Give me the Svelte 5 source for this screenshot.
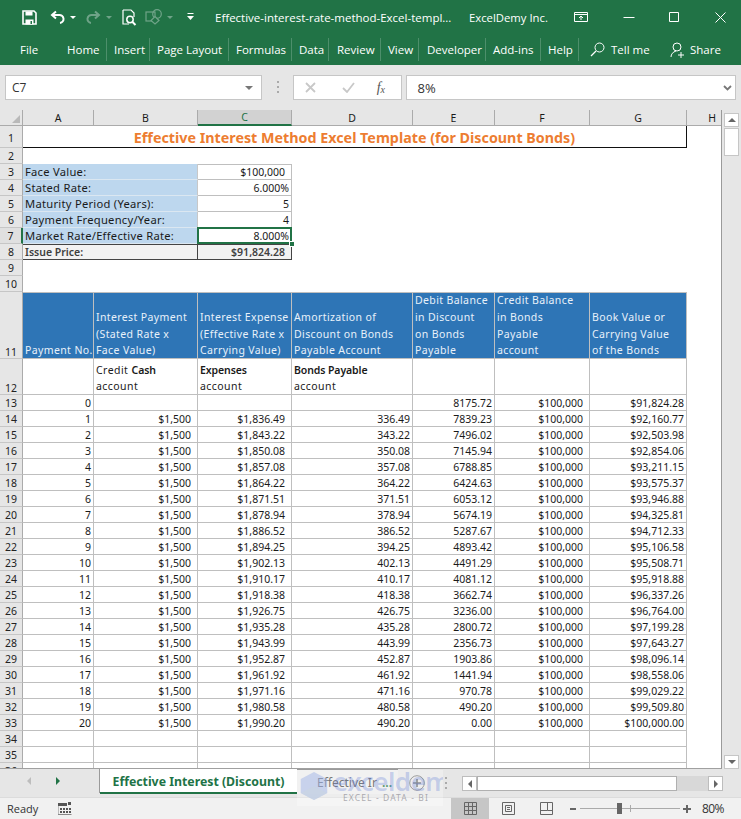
<script>
  const tabs = [
    ['Home', 'tHome'], ['Insert', 'tInsert'], ['Page Layout', 'tPage'], ['Formulas', 'tForm'], ['Data', 'tData'],
    ['Review', 'tRev'], ['View', 'tView'], ['Developer', 'tDev'], ['Add-ins', 'tAdd'], ['Help', 'tHelp']
  ];
  const cols = ['A', 'B', 'C', 'D', 'E', 'F', 'G', 'H'];
  const inputs = [
    [3, 'Face Value:', '$100,000', 'acc'],
    [4, 'Stated Rate:', '6.000%', ''],
    [5, 'Maturity Period (Years):', '5', ''],
    [6, 'Payment Frequency/Year:', '4', ''],
    [7, 'Market Rate/Effective Rate:', '8.000%', 'sel'],
    [8, 'Issue Price:', '$91,824.28', 'acc out']
  ];
  const exp = ['1,836.49','1,843.22','1,850.08','1,857.08','1,864.22','1,871.51','1,878.94','1,886.52','1,894.25','1,902.13','1,910.17','1,918.38','1,926.75','1,935.28','1,943.99','1,952.87','1,961.92','1,971.16','1,980.58','1,990.20'];
  const amo = ['336.49','343.22','350.08','357.08','364.22','371.51','378.94','386.52','394.25','402.13','410.17','418.38','426.75','435.28','443.99','452.87','461.92','471.16','480.58','490.20'];
  const deb = ['8175.72','7839.23','7496.02','7145.94','6788.85','6424.63','6053.12','5674.19','5287.67','4893.42','4491.29','4081.12','3662.74','3236.00','2800.72','2356.73','1903.86','1441.94','970.78','490.20','0.00'];
  const book = ['91,824.28','92,160.77','92,503.98','92,854.06','93,211.15','93,575.37','93,946.88','94,325.81','94,712.33','95,106.58','95,508.71','95,918.88','96,337.26','96,764.00','97,199.28','97,643.27','98,096.14','98,558.06','99,029.22','99,509.80','100,000.00'];
  const rows = deb.map((d, i) => ({
    row: 13 + i, n: i,
    pay: i ? '$1,500' : '', exp: i ? '$' + exp[i - 1] : '', amo: i ? amo[i - 1] : '',
    deb: d, book: '$' + book[i]
  }));
</script>

<div class="app">
  <header class="title">
    <svg class="ic save" viewBox="0 0 15 15"><path d="M1 1h11l2 2v11H1z" fill="none" stroke="#fff" stroke-width="1.6"/><path d="M3.5 1.5h7v4h-7zM3.5 9.500h8v5h-8z" fill="#fff"/><path d="M8.500 11h1.500v3H8.500z" fill="#217346"/></svg>
    <svg class="ic undo" viewBox="0 0 16 15"><path d="M6 1.500 2 5l4 3.500M2.500 5H9a4 4 0 0 1 1 8" fill="none" stroke="#fff" stroke-width="2"/></svg>
    <i class="caret c1"></i>
    <svg class="ic redo" viewBox="0 0 16 15"><path d="M10 1.500 14 5l-4 3.500M13.500 5H7a4 4 0 0 0-1 8" fill="none" stroke="#6fa388" stroke-width="2"/></svg>
    <i class="caret c2 dim"></i>
    <svg class="ic prev" viewBox="0 0 15 17"><path d="M1 1h8l3 3v4M1 1v14h6" fill="none" stroke="#fff" stroke-width="1.200"/><circle cx="8" cy="10.500" r="3.200" fill="none" stroke="#fff" stroke-width="1.500"/><path d="m10.500 13 3 3" stroke="#fff" stroke-width="2"/></svg>
    <svg class="ic shapes" viewBox="0 0 18 16"><rect x="1" y="3" width="9" height="9" fill="none" stroke="#6fa388" stroke-width="1.200"/><circle cx="12" cy="5" r="4.300" fill="none" stroke="#6fa388" stroke-width="1.200"/><path d="m10 7.500 4 4-4 3.500-4-3.500z" fill="#217346" stroke="#6fa388" stroke-width="1.200"/></svg>
    <i class="caret c3 dim"></i>
    <svg class="ic custom" viewBox="0 0 7 8"><path d="M.5 0h6v1h-6zM0 3h7L3.500 7z" fill="#fff"/></svg>
    <span class="fname">Effective-interest-rate-method-Excel-templ...</span>
    <span class="user">ExcelDemy Inc.</span>
    <svg class="ic display" viewBox="0 0 14 10"><path d="M.5.500h13v9H.500zM.5 2.500h13M7 8V4M5 6l2-2 2 2" fill="none" stroke="#fff"/></svg>
    <svg class="ic min" viewBox="0 0 11 1"><path d="M0 .5h11" stroke="#fff"/></svg>
    <svg class="ic max" viewBox="0 0 10 10"><path d="M.5.500h9v9h-9z" fill="none" stroke="#fff"/></svg>
    <svg class="ic close" viewBox="0 0 11 11"><path d="m.5.500 10 10m0-10-10 10" fill="none" stroke="#fff"/></svg>
  </header>

  <nav class="ribbon">
    <span class="file">File</span>
    {#each tabs as t}
      <span class="tab {t[1]}">{t[0]}</span>
    {/each}
    <svg class="ic search" viewBox="0 0 15 15"><circle cx="9.500" cy="5.500" r="4.500" fill="none" stroke="#fff"/><path d="M6 9 1 14" stroke="#fff" stroke-width="1.300"/></svg>
    <span class="tell">Tell me</span>
    <svg class="ic person" viewBox="0 0 16 16"><circle cx="7" cy="5" r="4" fill="none" stroke="#fff"/><path d="M1 15c0-3 2-5 5-6M11 10v6M8 13h6" fill="none" stroke="#fff"/></svg>
    <span class="share">Share</span>
  </nav>

  <section class="fbar">
    <div class="namebox"><span>C7</span><i class="caret gray"></i></div>
    <div class="grip"></div>
    <div class="btns">
      <svg class="bx" viewBox="0 0 11 11"><path d="m1 1 9 9m0-9-9 9" stroke="#c8c8c8" stroke-width="1.800"/></svg>
      <svg class="bc" viewBox="0 0 13 11"><path d="m1 6 4 4 7-9" fill="none" stroke="#c8c8c8" stroke-width="1.800"/></svg>
      <span class="fx">f<sub>x</sub></span>
    </div>
    <div class="formula"><span>8%</span>
      <svg class="chev" viewBox="0 0 9 6"><path d="m1 1 3.500 3.500L8 1" fill="none" stroke="#777" stroke-width="1.800"/></svg>
    </div>
  </section>

  <main class="sheet">
    <div class="gridwrap">
      <table>
        <colgroup>
          <col class="w0" /><col class="wa" /><col class="wb" /><col class="wc" /><col class="wd" /><col class="we" /><col class="wf" /><col class="wg" /><col />
        </colgroup>
        <thead>
          <tr class="rh">
            <th class="corner"><i></i></th>
            {#each cols as c}
              <th class="colh" class:active={c === 'C'} class:hcol={c === 'H'}>{c}</th>
            {/each}
          </tr>
        </thead>
        <tbody>
          <tr class="r1">
            <th class="rown">1</th>
            <td colspan="7" class="maintitle">Effective Interest Method Excel Template (for Discount Bonds)</td>
            <td></td>
          </tr>
          <tr class="r"><th class="rown">2</th><td colspan="8"></td></tr>
          {#each inputs as it}
            <tr class="r">
              <th class="rown" class:rsel={it[0] === 7}>{it[0]}</th>
              <td colspan="2" class="lab {it[3]}">{it[1]}</td>
              <td class="val {it[3]}">{it[2]}{#if it[0] === 7}<i class="selbox"></i><i class="handle"></i>{/if}</td>
              <td colspan="5"></td>
            </tr>
          {/each}
          <tr class="r"><th class="rown">9</th><td colspan="8"></td></tr>
          <tr class="r"><th class="rown">10</th><td colspan="8"></td></tr>
          <tr class="r11">
            <th class="rown bot">11</th>
            <td class="hd">Payment No.</td>
            <td class="hd">Interest Payment<br />(Stated Rate x<br />Face Value)</td>
            <td class="hd">Interest Expense<br />(Effective Rate x<br />Carrying Value)</td>
            <td class="hd">Amortization of<br />Discount on Bonds<br />Payable Account</td>
            <td class="hd">Debit Balance<br />in Discount<br />on Bonds<br />Payable</td>
            <td class="hd">Credit Balance<br />in Bonds<br />Payable<br />account</td>
            <td class="hd">Book Value or<br />Carrying Value<br />of the Bonds</td>
            <td></td>
          </tr>
          <tr class="r12">
            <th class="rown bot">12</th>
            <td class="g"></td>
            <td class="g sub">Credit <b>Cash</b><br />account</td>
            <td class="g sub"><b>Expenses</b><br />account</td>
            <td class="g sub"><b>Bonds Payable</b><br />account</td>
            <td class="g"></td><td class="g"></td><td class="g"></td><td></td>
          </tr>
          {#each rows as r}
            <tr class="r">
              <th class="rown">{r.row}</th>
              <td class="g num">{r.n}</td>
              <td class="g num">{r.pay}</td>
              <td class="g num">{r.exp}</td>
              <td class="g num">{r.amo}</td>
              <td class="g num">{r.deb}</td>
              <td class="g num pad">$100,000</td>
              <td class="g num">{r.book}</td>
              <td></td>
            </tr>
          {/each}
          {#each [34, 35, 36] as n}
            <tr class="r">
              <th class="rown">{n}</th>
              <td class="g"></td><td class="g"></td><td class="g"></td><td class="g"></td><td class="g"></td><td class="g"></td><td class="g"></td><td></td>
            </tr>
          {/each}
        </tbody>
      </table>
    </div>
    <aside class="vscroll">
      <button class="sbtn" aria-label="up"><i class="tri up"></i></button>
      <div class="vthumb"></div>
      <div class="vfill"></div>
      <button class="sbtn" aria-label="down"><i class="tri down"></i></button>
    </aside>
  </main>

  <section class="tabbar">
    <div class="navs"><i class="tri left dimtri"></i><i class="tri right green"></i></div>
    <div class="stab on">Effective Interest (Discount)</div>
    <div class="stab off"><span>Effective Ir</span><em>...</em></div>
    <div class="add"><svg viewBox="0 0 16 16"><circle cx="8" cy="8" r="7.300" fill="none" stroke="#777"/><path d="M8 4v8M4 8h8" stroke="#666" stroke-width="1.600"/></svg></div>
    <div class="grip tgrip"></div>
    <div class="hscroll">
      <button class="hbtn" aria-label="left"><i class="tri left"></i></button>
      <div class="hthumb"></div>
      <div class="hfill"></div>
      <button class="hbtn" aria-label="right"><i class="tri right"></i></button>
    </div>
  </section>

  <footer class="status">
    <span class="ready">Ready</span>
    <svg class="macro" viewBox="0 0 14 13"><path d="M0 1h9v3H0z" fill="#555"/><path d="M10 0h3v3h-3zM2 6h2v2H2zM5 6h2v2H5zM8 6h2v2H8zM11 6h2v2h-2zM2 9h2v2H2zM5 9h2v2H5zM8 9h2v2H8zM11 9h2v2h-2z" fill="#555"/><path d="M0 4v8.500h13.500" fill="none" stroke="#888"/></svg>
    <div class="views">
      <span class="vw act"><svg viewBox="0 0 13 13"><path d="M.5.500h12v12H.500zM.5 4.500h12M.5 8.500h12M4.500.500v12M8.500.500v12" fill="none" stroke="#666"/></svg></span>
      <span class="vw"><svg viewBox="0 0 13 13"><path d="M.5.500h12v12H.500zM3.500 3.500h6v6h-6zM5 5.500h3M5 7.500h3" fill="none" stroke="#666"/></svg></span>
      <span class="vw"><svg viewBox="0 0 13 13"><path d="M.5.500h12v12H.500zM.5 8.500h7v-8M7.500 8.500h5" fill="none" stroke="#666"/></svg></span>
    </div>
    <div class="zoom">
      <i class="zminus"></i>
      <div class="track"><i class="mid"></i><i class="knob"></i></div>
      <i class="zplus"></i>
      <span class="pct">80%</span>
    </div>
  </footer>

  <div class="wm" aria-hidden="true">
    <svg viewBox="0 0 34 34"><path d="M17 1 32 9v16l-15 8-15-8V9z" fill="#9fb4e8" fill-opacity=".5"/><path d="M17 17 32 25l-15 8-15-8z" fill="#c9d4e2" fill-opacity=".7"/></svg>
    <span class="wm1">exceldemy</span>
    <span class="wm2">EXCEL - DATA - BI</span>
  </div>
</div>

<style>
  :global(body) { margin: 0; background: #fff; }
  .app {
    position: relative; width: 741px; height: 819px; overflow: hidden;
    display: flex; flex-direction: column;
    font-family: "Open Sans", "Noto Sans", sans-serif; color: #222;
  }
  i { display: block; }
  .ic { display: block; flex: none; }

  .title {
    height: 38px; flex: none; background: #217346; color: #fff; box-sizing: border-box; padding-bottom: 4px;
    display: flex; align-items: center; font-size: 11.500px; white-space: nowrap;
  }
  .save { width: 15px; height: 15px; margin-left: 22px; }
  .undo { width: 16px; height: 15px; margin-left: 13px; }
  .caret { width: 0; height: 0; border-left: 3px solid transparent; border-right: 3px solid transparent; border-top: 3px solid #fff; flex: none; }
  .c1 { margin-left: 4px; }
  .redo { width: 16px; height: 15px; margin-left: 9px; }
  .c2 { margin-left: 5px; }
  .dim { border-top-color: #6fa388; }
  .prev { width: 15px; height: 17px; margin-left: 10px; }
  .shapes { width: 18px; height: 16px; margin-left: 8px; }
  .c3 { margin-left: 4px; }
  .custom { width: 7px; height: 8px; margin-left: 14px; }
  .fname { margin-left: 21px; width: 236px; }
  .user { margin-left: 18px; width: 78px; font-size: 11.300px; }
  .display { width: 14px; height: 10px; margin-left: 27px; }
  .min { width: 12px; height: 1px; margin-left: 35px; }
  .max { width: 10px; height: 10px; margin-left: 34px; }
  .close { width: 11px; height: 11px; margin-left: 36px; }

  .ribbon {
    height: 27px; flex: none; background: #217346; color: #fff;
    display: flex; align-items: flex-start; font-size: 11.500px; white-space: nowrap;
  }
  .ribbon span { line-height: 24px; }
  .file { margin-left: 20px; width: 39px; }
  .tab { padding-left: 8px; height: 23px; box-sizing: border-box; border-right: 1px solid #4d8f6b; }
  .tHome { width: 48px; }
  .tInsert { width: 43px; padding-left: 7px; }
  .tPage { width: 79px; padding-left: 7px; }
  .tForm { width: 63px; padding-left: 7px; }
  .tData { width: 37px; padding-left: 7px; }
  .tRev { width: 52px; padding-left: 8px; }
  .tView { width: 38px; padding-left: 7px; }
  .tDev { width: 67px; padding-left: 8px; }
  .tAdd { width: 55px; padding-left: 7px; }
  .tHelp { width: 38px; padding-left: 7px; }
  .search { width: 15px; height: 15px; margin: 4px 0 0 11px; }
  .tell { margin-left: 6px; width: 59px; }
  .person { width: 16px; height: 16px; margin: 4px 0 0 0; }
  .share { margin-left: 4px; }

  .fbar {
    height: 45px; flex: none; background: #e6e6e6; box-sizing: border-box;
    display: flex; align-items: flex-start; padding: 10px 5px 0; font-size: 12px;
  }
  .namebox, .btns, .formula {
    height: 25px; box-sizing: border-box; background: #fff; border: 1px solid #c6c6c6;
    display: flex; align-items: center; position: relative;
  }
  .namebox { width: 257px; padding: 0 6px; justify-content: space-between; font-size: 12px; color: #333; }
  .caret.gray { border-top-color: #777; border-left-width: 4px; border-right-width: 4px; border-top-width: 4px; margin-right: 2px; }
  .grip { width: 2px; height: 12px; margin: 6px 14px 0 15px; background: repeating-linear-gradient(#aaa 0 2px, transparent 2px 5px); flex: none; }
  .btns { width: 110px; }
  .bx { width: 11px; height: 11px; margin-left: 11px; }
  .bc { width: 13px; height: 11px; margin-left: 26px; }
  .fx { margin-left: 22px; font-family: "Liberation Serif", serif; font-style: italic; font-size: 14px; color: #555; }
  .fx sub { font-size: 10px; vertical-align: -1px; line-height: 0; }
  .formula { width: 330px; margin-left: 4px; padding-left: 10px; color: #333; font-size: 13px; justify-content: space-between; }
  .chev { width: 9px; height: 6px; margin-right: 3px; }

  .sheet { height: 659px; flex: none; display: flex; position: relative; background: #fff; }
  .gridwrap { width: 721px; flex: none; overflow: hidden; border-right: 1px solid #9a9a9a; border-bottom: 1px solid #a0a0a0; box-sizing: content-box; height: 658px; }
  table {
    table-layout: fixed; width: 721px; border-collapse: separate; border-spacing: 0;
    font-family: "Noto Sans", "Open Sans", sans-serif; font-size: 10.500px; color: #1a1a1a;
  }
  .w0 { width: 23px; } .wa { width: 71px; } .wb { width: 104px; } .wc { width: 94px; }
  .wd { width: 121px; } .we { width: 82px; } .wf { width: 95px; } .wg { width: 97px; }
  td, th { padding: 0; box-sizing: border-box; overflow: hidden; white-space: nowrap; font-weight: 400; }
  .rh th { height: 16px; background: #e6e6e6; border-right: 1px solid #ababab; border-bottom: 1px solid #ababab; font-size: 10.500px; line-height: 14px; padding-top: 1px; }
  .rh th.hcol { border-right: 0; text-align: right; padding-right: 5px; }
  .corner { position: relative; }
  .corner i { position: absolute; right: 2px; bottom: 2px; width: 0; height: 0; border-left: 8px solid transparent; border-bottom: 8px solid #b9b9b9; }
  .rh th.colh.active { background: #d2d2d2; color: #217346; border-bottom: 2px solid #217346; padding-top: 0; }
  .rown {
    background: #e6e6e6; border-right: 1px solid #ababab; border-bottom: 1px solid #c6c6c6;
    text-align: center; font-size: 10.500px; line-height: 14px; color: #222;
  }
  .rsel { background: #e0e0e0; border-right: 2px solid #217346; }
  .bot { vertical-align: bottom; line-height: 12px; }
  .r1 { height: 22px; }
  .r1 .rown { padding-top: 3px; }
  .maintitle {
    text-align: center; font-size: 14.300px; font-weight: 700; color: #ed7d31; line-height: 19px; padding-top: 1px;
    border-bottom: 1.500px solid #111; border-right: 1px solid #111;
  }
  .r { height: 16px; }
  .r td { line-height: 14px; }
  .lab { background: #bdd7ee; padding-left: 2px; border-bottom: 1px solid #dbe7f1; border-right: 1px solid #c8c8c8; font-size: 11.200px; letter-spacing: .26px; }
  .val { text-align: right; padding-right: 2px; border-bottom: 1px solid #bfbfbf; border-right: 1px solid #bfbfbf; position: relative; overflow: visible; }
  tr:nth-child(3) .val { box-shadow: inset 0 1px #bfbfbf; }
  .val.acc { padding-right: 6px; }
  .selbox { position: absolute; left: -1px; top: -1px; right: -1px; bottom: -1px; border: 2px solid #217346; }
  .handle { position: absolute; right: -4px; bottom: -4px; width: 4px; height: 4px; background: #217346; border: 1px solid #fff; z-index: 2; }
  .lab.out, .val.out { background: #f2f2f2; color: #3f3f3f; font-weight: 600; border-top: 1px solid #444; border-bottom: 1px solid #444; border-right: 1px solid #444; }
  .lab.out { font-size: 10.500px; letter-spacing: 0; }
  .r11 { height: 67px; }
  .hd {
    background: #2e75b6; color: #e8f1fa; vertical-align: bottom; line-height: 16.750px; letter-spacing: .38px;
    padding-left: 2px; border-right: 1px solid #bfbfbf; box-shadow: inset 0 1px #bfbfbf, inset 0 -1px #bfbfbf;
  }
  .r12 { height: 36px; }
  .g { border-right: 1px solid #bfbfbf; border-bottom: 1px solid #bfbfbf; }
  .sub { padding-left: 2px; line-height: 16px; vertical-align: bottom; letter-spacing: .45px; }
  .sub b { font-weight: 600; letter-spacing: -.1px; }
  .num { text-align: right; padding-right: 2px; }
  .r td.num:nth-child(3), .r td.num:nth-child(4) { padding-right: 6px; }
  .num.pad { padding-right: 6px; }

  .vscroll { flex: 1; background: #e6e6e6; display: flex; flex-direction: column; align-items: center; padding-top: 3px; box-sizing: border-box; }
  .sbtn { width: 15px; height: 14px; padding: 0; background: #fff; border: 1px solid #c6c6c6; display: flex; align-items: center; justify-content: center; flex: none; }
  .vthumb { width: 15px; height: 28px; background: #fff; border: 1px solid #c6c6c6; box-sizing: border-box; margin-top: 1px; flex: none; }
  .vfill { flex: 1; }
  .tri { width: 0; height: 0; border-style: solid; border-color: transparent; }
  .tri.up { border-width: 0 4px 4px; border-bottom-color: #666; }
  .tri.down { border-width: 4px 4px 0; border-top-color: #666; }
  .tri.left { border-width: 4px 4px 4px 0; border-right-color: #666; }
  .tri.right { border-width: 4px 0 4px 4px; border-left-color: #666; }
  .tri.left.dimtri { border-right-color: #bdbdbd; }
  .tri.right.green { border-left-color: #217346; }

  .tabbar { height: 28px; flex: none; background: #e6e6e6; display: flex; align-items: flex-start; font-family: "Noto Sans", sans-serif; }
  .navs { width: 100px; flex: none; display: flex; align-items: center; height: 24px; padding-left: 27px; gap: 25px; box-sizing: border-box; border-right: 1px solid #9a9a9a; }
  .stab { height: 25px; box-sizing: border-box; white-space: nowrap; }
  .on { width: 197px; background: #fff; color: #217346; font-weight: 700; font-size: 12.300px; text-align: center; line-height: 26px; border-bottom: 2px solid #217346; }
  .off { width: 101px; padding-left: 20px; font-size: 12px; line-height: 26px; color: #444; border-top: 1px solid #9a9a9a; display: flex; background: #ececec; }
  .off em { color: #217346; font-style: normal; margin-left: 5px; font-weight: 700; }
  .add { width: 16px; height: 16px; margin: 6px 0 0 11px; }
  .add svg { display: block; width: 16px; height: 16px; }
  .tgrip { margin: 8px 15px 0 20px; }
  .hscroll { width: 261px; display: flex; margin-top: 7px; height: 15px; background: #d8d8d8; flex: none; }
  .hbtn { width: 15px; height: 15px; padding: 0; background: #fff; border: 1px solid #bdbdbd; display: flex; align-items: center; justify-content: center; flex: none; }
  .hthumb { width: 200px; box-sizing: border-box; background: #fff; border: 1px solid #b0b0b0; }
  .hfill { flex: 1; }

  .status { height: 22px; flex: none; background: #f1f1f1; display: flex; align-items: center; font-size: 11px; color: #333; position: relative; border-top: 1px solid #dcdcdc; box-sizing: border-box; }
  .ready { margin-left: 7px; width: 51px; }
  .macro { width: 14px; height: 13px; }
  .views { display: flex; margin-left: 379px; height: 100%; }
  .vw { width: 38px; height: 100%; display: flex; align-items: center; justify-content: center; }
  .vw svg { width: 13px; height: 13px; }
  .act { background: #c6c6c6; }
  .zoom { display: flex; align-items: center; flex: 1; height: 100%; }
  .zminus { width: 6px; height: 2px; background: #666; margin-left: 5px; }
  .track { width: 100px; height: 1px; background: #aaa; margin-left: 4px; position: relative; }
  .mid { position: absolute; left: 50px; top: -3px; width: 1px; height: 7px; background: #aaa; }
  .knob { position: absolute; left: 37px; top: -5px; width: 5px; height: 11px; background: #666; }
  .zplus { width: 8px; height: 8px; margin-left: 3px; background: linear-gradient(#666,#666) center/8px 2px no-repeat, linear-gradient(#666,#666) center/2px 8px no-repeat; }
  .pct { margin-left: 11px; font-size: 12px; letter-spacing: -.6px; }

  .wm { position: absolute; left: 297px; top: 770px; width: 146px; height: 36px; background: rgba(255,255,255,.28); pointer-events: none; overflow: hidden; }
  .wm svg { position: absolute; left: 2px; top: 0; width: 30px; height: 32px; }
  .wm1 { position: absolute; left: 36px; top: -4px; font-size: 26px; font-weight: 600; line-height: 30px; color: rgba(90,120,215,.3); letter-spacing: -.5px; font-family: "Noto Sans", sans-serif; }
  .wm2 { position: absolute; left: 46px; top: 22px; font-size: 8.500px; line-height: 11px; letter-spacing: 1.100px; color: rgba(120,120,130,.6); font-family: "Noto Sans", sans-serif; }
</style>
